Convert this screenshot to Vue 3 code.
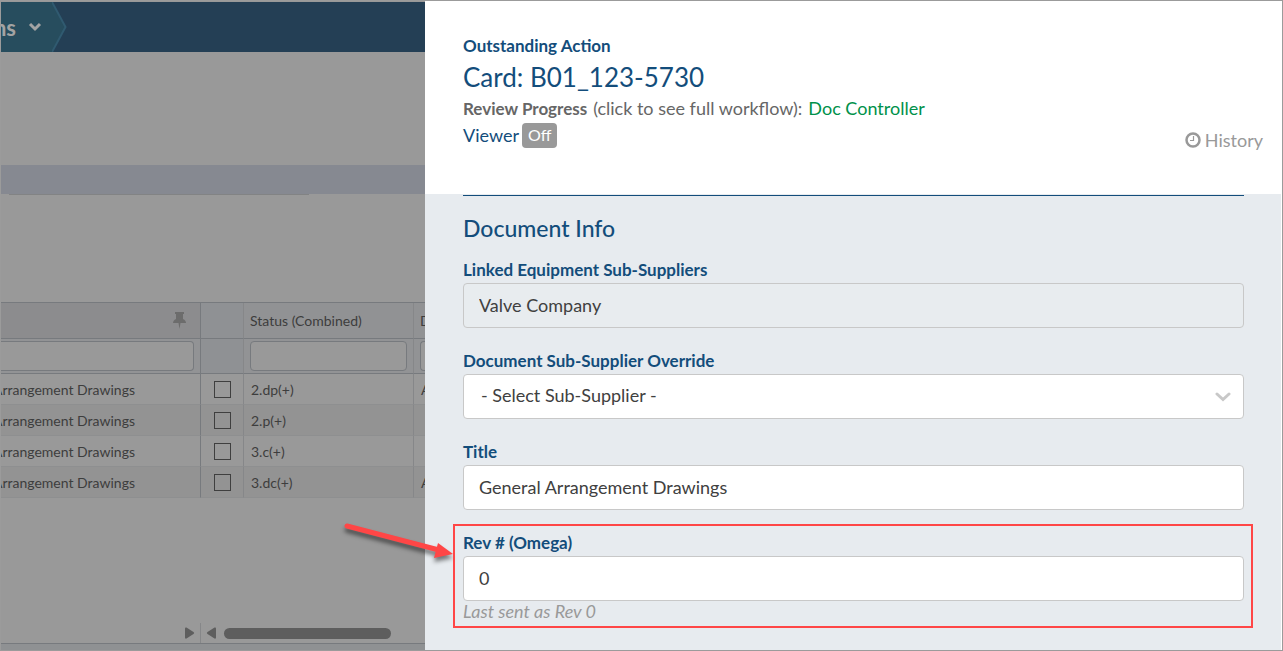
<script setup>
import { ref } from 'vue'

const rows = ref([
  { name: 'Arrangement Drawings', picked: false, status: '2.dp(+)', next: 'A' },
  { name: 'Arrangement Drawings', picked: false, status: '2.p(+)', next: '' },
  { name: 'Arrangement Drawings', picked: false, status: '3.c(+)', next: '' },
  { name: 'Arrangement Drawings', picked: false, status: '3.dc(+)', next: 'A' },
])
const linked = ref('Valve Company')
const supplier = ref('')
const title = ref('General Arrangement Drawings')
const rev = ref('0')
</script>

<template>
  <div class="app">
    <section class="backdrop">
      <header class="topbar">
        <button class="crumb" type="button">
          <span>ns</span>
          <svg width="14" height="10" viewBox="0 0 14 10" fill="none" stroke="#a3a3a3" stroke-width="3">
            <path d="M2 2l5 5 5-5" />
          </svg>
        </button>
        <svg class="crumb-tip" width="16" height="50" viewBox="0 0 16 50">
          <path d="M0 0L14 25 0 50z" fill="#274d5e" />
          <path d="M0 0L13.500 25 0 50" fill="none" stroke="#305a70" stroke-width="2" />
        </svg>
      </header>
      <div class="band"></div>
      <div class="band-edge"></div>

      <table class="grid">
        <colgroup>
          <col class="c-name"><col class="c-pick"><col class="c-status"><col>
        </colgroup>
        <thead>
          <tr class="head">
            <th class="pinned">
              <svg class="pin" width="13" height="17" viewBox="0 0 13 17" fill="#6c6c6c">
                <path d="M2 0h9v2H10v5c2 1 3 2.500 3 4H7.500L6.500 17 5.500 11H0c0-1.500 1-3 3-4V2H2z" />
              </svg>
            </th>
            <th class="tint"></th>
            <th>Status (Combined)</th>
            <th class="cut">D</th>
          </tr>
          <tr class="filters">
            <td class="f-name"><input type="text" aria-label="Filter by name"></td>
            <td class="tint"></td>
            <td><input type="text" aria-label="Filter by status"></td>
            <td class="f-cut"><input type="text" aria-label="Filter next column"></td>
          </tr>
        </thead>
        <tbody>
          <tr v-for="(row, i) in rows" :key="i">
            <td class="name"><div>{{ row.name }}</div></td>
            <td class="pick"><input v-model="row.picked" type="checkbox" aria-label="Select row"></td>
            <td>{{ row.status }}</td>
            <td class="cut">{{ row.next }}</td>
          </tr>
        </tbody>
      </table>

      <div class="scroller">
        <div class="scroll-left">
          <svg width="10" height="12" viewBox="0 0 10 12" fill="#5e5e5e"><path d="M0 1.500Q0 0 1.500 .5L8.500 5Q10 6 8.500 7L1.500 11.500Q0 12 0 10.500z" /></svg>
        </div>
        <div class="scroll-right">
          <svg width="10" height="12" viewBox="0 0 10 12" fill="#5e5e5e"><path d="M10 1.500Q10 0 8.500 .5L1.500 5Q0 6 1.500 7L8.500 11.500Q10 12 10 10.500z" /></svg>
          <div class="thumb"></div>
        </div>
      </div>
      <div class="statusbar"></div>
    </section>

    <main class="panel">
      <header class="card-head">
        <div class="card-title">
          <p class="kicker">Outstanding Action</p>
          <h1>Card: B01_123-5730</h1>
          <p class="progress">
            <strong>Review Progress</strong>
            <span>(click to see full workflow):</span>
            <a href="#workflow">Doc Controller</a>
          </p>
          <p class="viewer">
            <span>Viewer</span>
            <button type="button" class="toggle">Off</button>
          </p>
        </div>
        <button type="button" class="history">
          <svg width="16" height="16" viewBox="0 0 16 16" fill="none" stroke="#999">
            <circle cx="8" cy="8" r="6.500" stroke-width="2.500" />
            <path d="M8.500 4v4.500H5" stroke-width="1.200" />
          </svg>
          <span>History</span>
        </button>
      </header>

      <form class="info" @submit.prevent>
        <h2>Document Info</h2>
        <div class="field">
          <label for="linked">Linked Equipment Sub-Suppliers</label>
          <input id="linked" v-model="linked" type="text" readonly>
        </div>
        <div class="field">
          <label for="supplier">Document Sub-Supplier Override</label>
          <div class="select">
            <select id="supplier" v-model="supplier">
              <option value="">- Select Sub-Supplier -</option>
            </select>
            <svg width="16" height="10" viewBox="0 0 16 10" fill="none" stroke="#c8c8c8" stroke-width="3" stroke-linecap="round">
              <path d="M2 2l6 5.500L14 2" />
            </svg>
          </div>
        </div>
        <div class="field">
          <label for="title">Title</label>
          <input id="title" v-model="title" type="text">
        </div>
        <div class="field marked">
          <label for="rev">Rev # (Omega)</label>
          <input id="rev" v-model="rev" type="text">
          <p class="hint">Last sent as Rev 0</p>
          <svg class="arrow" width="116" height="48" viewBox="0 0 116 48">
            <path d="M8 7L98 30.500" stroke="#ff4646" stroke-width="5" stroke-linecap="round" />
            <path d="M99 24L114 35 95 39z" fill="#ff4646" />
          </svg>
        </div>
      </form>
    </main>
  </div>
</template>

<style>
body {
  margin: 0;
}
</style>

<style scoped>
* {
  box-sizing: border-box;
}
.app {
  display: grid;
  grid-template-columns: 424px 1fr;
  min-height: 100vh;
  border: 1px solid #9b9b9b;
  font-family: Lato, "Open Sans", sans-serif;
  background: #fff;
}
button, input, select {
  font-family: inherit;
  margin: 0;
}
h1, h2, p {
  margin: 0;
  font-weight: 400;
}

.backdrop {
  display: flex;
  flex-direction: column;
  background: #999;
  overflow: hidden;
  padding-top: 1px;
}
.topbar {
  display: flex;
  height: 50px;
  background: #243f55;
}
.crumb {
  display: flex;
  align-items: center;
  justify-content: flex-end;
  gap: 12px;
  width: 51px;
  padding: 0 10px 0 0;
  border: 0;
  background: #274d5e;
  color: #a3a3a3;
  font-size: 22px;
  font-weight: 700;
}
.crumb svg {
  flex: none;
}
.band {
  height: 29px;
  margin-top: 113px;
  background: #868991;
}
.band-edge {
  width: 300px;
  height: 1px;
  margin-left: 8px;
  background: #828384;
}

.grid {
  width: 100%;
  margin-top: 107px;
  table-layout: fixed;
  border-collapse: separate;
  border-spacing: 0;
  border-top: 1px solid #777a7e;
  font-size: 14px;
  color: #3d3d3d;
}
.c-name { width: 200px; }
.c-pick { width: 43px; }
.c-status { width: 170px; }
.grid th, .grid td {
  padding: 0 6px;
  text-align: left;
  font-weight: 400;
  white-space: nowrap;
  overflow: hidden;
  border-right: 1px solid #868789;
}
.head th {
  height: 36px;
  padding-bottom: 1px;
  background: #919294;
  border-bottom: 1px solid #777a7e;
}
.grid .pinned {
  text-align: right;
  padding-right: 14px;
  background: #8c8c8e;
}
.grid tr > :first-child {
  border-right-color: #777a7e;
}
.pin {
  display: block;
  margin-left: auto;
}
.filters td {
  height: 35px;
  background: #929395;
  border-bottom: 1px solid #777a7e;
}
.grid .filters .tint, .head .tint {
  background: #8f9194;
}
.filters input {
  display: block;
  width: 100%;
  height: 30px;
  border: 1px solid #777a7e;
  border-radius: 4px;
  background: #999;
}
.grid .f-name {
  padding-left: 0;
}
.f-name input {
  border-left: 0;
  border-radius: 0 4px 4px 0;
}
.grid .f-cut {
  padding-right: 0;
}
.f-cut input {
  border-right: 0;
  border-radius: 4px 0 0 4px;
}
.grid tr > :last-child {
  border-right: 0;
}
.grid tbody td {
  height: 31px;
  padding-left: 7px;
  border-bottom: 1px solid #8e8f90;
}
.grid tbody tr:nth-child(even) td {
  background: #939393;
}
.grid tbody .name {
  padding-left: 0;
  padding-right: 65px;
}
.name div {
  display: flex;
  justify-content: flex-end;
}
.pick input {
  display: block;
  appearance: none;
  width: 17px;
  height: 17px;
  margin: 0 auto;
  border: 1px solid #3f3f3f;
}

.scroller {
  display: flex;
  height: 20px;
  margin-top: auto;
}
.scroll-left, .scroll-right {
  display: flex;
  align-items: center;
}
.scroll-left {
  width: 200px;
  justify-content: flex-end;
  padding-right: 5px;
  border-right: 1px solid #868789;
}
.scroll-right {
  flex: 1;
  gap: 8px;
  padding: 0 34px 0 5px;
}
.thumb {
  flex: 1;
  height: 11px;
  border-radius: 6px;
  background: #5e5e5e;
}
.statusbar {
  height: 7px;
  border-top: 1px solid #777a7e;
  background: #8f9193;
}

.panel {
  display: flex;
  flex-direction: column;
  margin-right: 1px;
  background: #e7ebef;
  color: #134d7b;
  font-size: 18px;
}
.card-head {
  display: flex;
  justify-content: space-between;
  align-items: flex-end;
  min-height: 193px;
  padding: 32px 18px 41px 38px;
  background: #fff;
}
.card-title {
  align-self: flex-start;
}
.kicker {
  font-size: 17px;
  line-height: 26px;
  font-weight: 700;
}
h1 {
  font-size: 26px;
  line-height: 36px;
}
.progress {
  display: flex;
  align-items: baseline;
  gap: 6px;
  line-height: 26px;
  color: #666;
}
.progress strong {
  font-size: 17px;
  font-weight: 700;
}
.progress a {
  color: #00914a;
  text-decoration: none;
}
.viewer {
  display: flex;
  align-items: center;
  gap: 3px;
  line-height: 26px;
}
.toggle {
  height: 25px;
  padding: 0 6px 2px;
  border: 0;
  border-radius: 4px;
  background: #999;
  color: #fff;
  font-size: 16px;
}
.history {
  display: flex;
  align-items: center;
  gap: 4px;
  padding: 0;
  border: 0;
  background: none;
  color: #999;
  font-size: 18px;
  line-height: 26px;
}

.info {
  display: flex;
  flex-direction: column;
  gap: 20px;
  margin: 1px 37px 0 38px;
  border-top: 1px solid #134d7b;
}
h2 {
  margin-top: 15px;
  margin-bottom: -8px;
  font-size: 23px;
  line-height: 34px;
  font-weight: 500;
}
.field {
  display: flex;
  flex-direction: column;
}
.field label {
  font-size: 17px;
  line-height: 26px;
  font-weight: 700;
}
.field input, .field select {
  width: 100%;
  height: 45px;
  padding: 0 15px 2px;
  border: 1px solid #c8c8c8;
  border-radius: 4px;
  background: #fff;
  color: #404040;
  font-size: 18px;
}
.field input[readonly] {
  background: #e8ecef;
}
.select {
  position: relative;
}
.field select {
  display: block;
  appearance: none;
  padding: 0 40px 4px 17px;
}
.select svg {
  position: absolute;
  right: 13px;
  top: 18px;
  pointer-events: none;
}
.hint {
  line-height: 20px;
  font-style: italic;
  color: #999;
}
.marked {
  position: relative;
}
.marked::after {
  content: "";
  position: absolute;
  inset: -6px -9px -7px -10px;
  border: 2px solid #ff4646;
  pointer-events: none;
}
.arrow {
  position: absolute;
  left: -124px;
  top: -11px;
  filter: drop-shadow(0 4px 2px rgba(0, 0, 0, 0.5));
  pointer-events: none;
}
</style>
